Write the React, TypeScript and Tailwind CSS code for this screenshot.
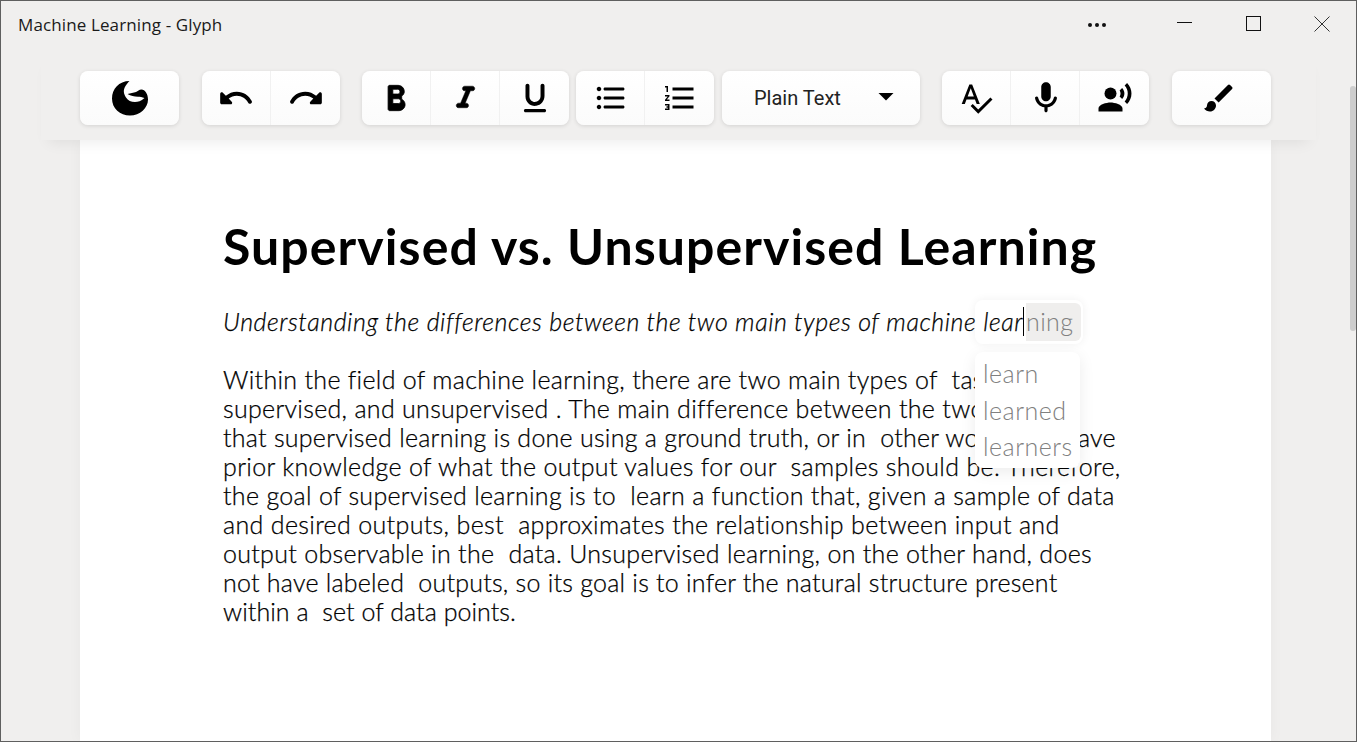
import {
  MdFormatListNumbered,
  MdSpellcheck,
  MdRecordVoiceOver,
  MdBrush,
  MdArrowDropDown,
} from "react-icons/md";
import type { ReactNode } from "react";

// tracking is per line so the line ends land where the reference breaks them
const bodyLines = [
  { text: "Within the field of machine learning, there are two main types of  tasks:", fit: "tracking-[0.3px]" },
  { text: "supervised, and unsupervised . The main difference between the two is", fit: "tracking-[0.3px]" },
  { text: "that supervised learning is done using a ground truth, or in  other words, we have", fit: "tracking-[0.26px]" },
  { text: "prior knowledge of what the output values for our  samples should be. Therefore,", fit: "tracking-[0.34px]" },
  { text: "the goal of supervised learning is to  learn a function that, given a sample of data", fit: "tracking-[0.31px]" },
  { text: "and desired outputs, best  approximates the relationship between input and", fit: "tracking-[0.34px]" },
  { text: "output observable in the  data. Unsupervised learning, on the other hand, does", fit: "tracking-[0.29px]" },
  { text: "not have labeled  outputs, so its goal is to infer the natural structure present", fit: "tracking-[0.24px]" },
  { text: "within a  set of data points.", fit: "tracking-[0.05px]" },
];

// rounded material glyphs, react-icons only ships the sharp ones
const glyphs = {
  undo: "M12.500 8c-2.650 0-5.050.99-6.900 2.600L3.710 8.710C3.080 8.080 2 8.520 2 9.410V15c0 .55.45 1 1 1h5.590c.89 0 1.340-1.080.71-1.710l-1.910-1.910c1.390-1.160 3.160-1.880 5.120-1.880 3.160 0 5.890 1.840 7.190 4.500.27.560.91.840 1.500.640.710-.230 1.070-1.040.750-1.720C20.230 10.420 16.650 8 12.500 8z",
  redo: "M18.400 10.600C16.550 8.990 14.150 8 11.500 8c-4.160 0-7.740 2.420-9.450 5.930-.32.670.04 1.470.75 1.710.590.200 1.230-.080 1.500-.640 1.300-2.660 4.030-4.500 7.200-4.500 1.950 0 3.730.720 5.120 1.880l-1.910 1.910c-.63.630-.19 1.710.70 1.710H21c.55 0 1-.45 1-1V9.410c0-.89-1.080-1.330-1.710-.7l-1.890 1.890z",
  bold: "M15.600 10.790c.97-.67 1.650-1.770 1.650-2.790 0-2.260-1.750-4-4-4H8c-.55 0-1 .45-1 1v14c0 .55.45 1 1 1h5.780c2.070 0 3.960-1.690 3.970-3.770.01-1.530-.85-2.840-2.150-3.440zM10 6.500h3c.83 0 1.500.67 1.500 1.500s-.67 1.500-1.500 1.500h-3v-3zm3.500 9H10v-3h3.500c.83 0 1.500.67 1.500 1.500s-.67 1.500-1.500 1.500z",
  italic: "M10 5.500c0 .83.67 1.500 1.500 1.500h.71l-3.420 8H7.500c-.83 0-1.500.67-1.500 1.500S6.670 18 7.500 18h5c.83 0 1.500-.67 1.500-1.500s-.67-1.500-1.500-1.500h-.71l3.420-8h1.290c.83 0 1.500-.67 1.500-1.500S17.330 4 16.500 4h-5c-.83 0-1.500.67-1.500 1.500z",
  underline: "M12.790 16.950c3.030-.39 5.210-3.110 5.210-6.170V4.250C18 3.560 17.440 3 16.750 3s-1.250.56-1.250 1.250v6.650c0 1.670-1.130 3.190-2.770 3.520-2.250.47-4.230-1.250-4.230-3.420V4.250C8.500 3.560 7.940 3 7.250 3S6 3.560 6 4.250v6.750c0 3.570 3.130 6.420 6.790 5.950zM5 20c0 .55.45 1 1 1h12c.55 0 1-.45 1-1s-.45-1-1-1H6c-.55 0-1 .45-1 1z",
  bullets: "M4 10.500c-.83 0-1.500.67-1.500 1.500s.67 1.500 1.500 1.500 1.500-.67 1.500-1.500-.67-1.500-1.500-1.500zm0-6c-.83 0-1.500.67-1.500 1.500S3.170 7.500 4 7.500 5.500 6.830 5.500 6 4.830 4.500 4 4.500zm0 12c-.83 0-1.500.68-1.500 1.500s.68 1.500 1.500 1.500 1.500-.68 1.500-1.500-.67-1.500-1.500-1.500zM8 19h12c.55 0 1-.45 1-1s-.45-1-1-1H8c-.55 0-1 .45-1 1s.45 1 1 1zm0-6h12c.55 0 1-.45 1-1s-.45-1-1-1H8c-.55 0-1 .45-1 1s.45 1 1 1zM7 6c0 .55.45 1 1 1h12c.55 0 1-.45 1-1s-.45-1-1-1H8c-.55 0-1 .45-1 1z",
  mic: "M12 14c1.660 0 3-1.340 3-3V5c0-1.660-1.340-3-3-3S9 3.340 9 5v6c0 1.660 1.340 3 3 3zm5.910-3c-.49 0-.9.36-.98.85C16.520 14.200 14.470 16 12 16s-4.520-1.800-4.930-4.150c-.08-.49-.49-.85-.98-.85-.61 0-1.090.54-1 1.140.49 3 2.890 5.350 5.910 5.780V20c0 .55.45 1 1 1s1-.45 1-1v-2.080c3.020-.43 5.420-2.780 5.910-5.780.1-.6-.39-1.140-1-1.140z",
};

function Glyph({ d, size = 36, weight = 0 }: { d: string; size?: number; weight?: number }) {
  return (
    <svg width={size} height={size} viewBox="0 0 24 24" fill="#000" stroke="#000" strokeWidth={weight} strokeLinejoin="round">
      <path d={d} />
    </svg>
  );
}

function Logo() {
  return (
    <svg width="36" height="35" viewBox="0 0 36 35">
      <path
        d="M17.500 0C7 0 0 8 0 17.500C0 27.500 8 34.500 18 34.500C28 34.500 36 27 36 18.500C36 13 33 8.500 29.500 8.500C27 8.500 26 10 24 11C21.500 12 18.500 12 15.500 13C19 15 22 15.500 26 15.700C28 15.800 30 16 32.500 17C29 20.300 26 21 23 21C19 21 16 19.500 14 16.500C11.500 12.500 11 9 13.500 5C15 3 16 1 17.500 0z"
        fill="#000"
      />
    </svg>
  );
}

function Group({ className, children }: { className: string; children: ReactNode }) {
  return (
    <div
      className={`flex h-[54px] divide-x divide-[#f1f1f1] rounded-lg bg-gradient-to-b from-white to-[#fbfbfb] shadow-[0_1px_4px_rgba(0,0,0,0.12)] ${className}`}
    >
      {children}
    </div>
  );
}

function Tool({ children, width = "w-[69px]" }: { children: ReactNode; width?: string }) {
  return <div className={`flex ${width} items-center justify-center text-black`}>{children}</div>;
}

export default function App() {
  return (
    <div className="relative flex h-[742px] w-full flex-col overflow-hidden border border-[#5f5f5f] bg-[#f0efee] font-['Lato',sans-serif]">
      <div className="flex h-[50px] shrink-0 items-start justify-between">
        <div className="pl-[17px] pt-[13px] font-['Open_Sans',sans-serif] text-[17px] leading-[22px] tracking-[0.12px] text-[#1a1a1a]">
          Machine Learning - Glyph
        </div>
        <div className="flex items-start pt-[15px]">
          <div className="mr-[70px] mt-[7px] flex -translate-x-px gap-[3px]">
            <span className="h-[4px] w-[4px] rounded-full bg-[#111]" />
            <span className="h-[4px] w-[4px] rounded-full bg-[#111]" />
            <span className="h-[4px] w-[4px] rounded-full bg-[#111]" />
          </div>
          <div className="mr-[54px] mt-[6px] h-px w-[15px] bg-[#111]" />
          <div className="mr-[53px] h-[15px] w-[15px] border border-[#111]" />
          <svg className="mr-[26px]" width="16" height="16" viewBox="0 0 16 16">
            <path d="M0.500 0.500L15.500 15.500M15.500 0.500L0.500 15.500" stroke="#333" fill="none" />
          </svg>
        </div>
      </div>

      <div className="relative z-10 mx-[40px] flex h-[89px] shrink-0 items-start bg-[#f0efee] pl-[39px] pt-[20px] shadow-[0_10px_14px_-8px_rgba(0,0,0,0.08)]">
        <Group className="w-[99px]">
          <Tool width="w-full">
            <Logo />
          </Tool>
        </Group>
        <Group className="ml-[23px] w-[138px]">
          <Tool>
            <Glyph d={glyphs.undo} size={38} />
          </Tool>
          <Tool>
            <Glyph d={glyphs.redo} size={38} />
          </Tool>
        </Group>
        <Group className="ml-[22px] w-[207px]">
          <Tool>
            <Glyph d={glyphs.bold} size={38} weight={0.5} />
          </Tool>
          <Tool>
            <Glyph d={glyphs.italic} size={37} weight={0.3} />
          </Tool>
          <Tool>
            <Glyph d={glyphs.underline} size={38} />
          </Tool>
        </Group>
        <Group className="ml-[7px] w-[138px]">
          <Tool>
            <div className="pl-[2px]">
              <Glyph d={glyphs.bullets} size={36} />
            </div>
          </Tool>
          <Tool>
            <MdFormatListNumbered size={36} />
          </Tool>
        </Group>
        <div className="ml-[8px] flex h-[54px] w-[198px] items-center rounded-lg bg-gradient-to-b from-white to-[#fbfbfb] pl-[32px] shadow-[0_1px_4px_rgba(0,0,0,0.12)]">
          <span className="font-['Roboto',sans-serif] text-[20px] text-[#222]">Plain Text</span>
          <MdArrowDropDown className="ml-[27px] -translate-y-[2px]" size={36} />
        </div>
        <Group className="ml-[22px] w-[207px]">
          <Tool>
            <MdSpellcheck size={36} />
          </Tool>
          <Tool>
            <div className="pl-[2px]">
              <Glyph d={glyphs.mic} size={38} />
            </div>
          </Tool>
          <Tool>
            <MdRecordVoiceOver size={36} />
          </Tool>
        </Group>
        <Group className="ml-[23px] w-[99px]">
          <Tool width="w-full">
            <div className="pr-[6px]">
              <MdBrush size={36} />
            </div>
          </Tool>
        </Group>
      </div>

      <div className="relative ml-[79px] mr-[85px] flex-1 bg-white pl-[143px] pt-[77px] text-black shadow-[0_0_14px_rgba(0,0,0,0.04)]">
        <div className="absolute left-[895px] top-[160px] h-[44px] w-[108px] rounded-lg bg-white shadow-[0_0_10px_rgba(0,0,0,0.06)]">
          <div className="absolute left-[51px] top-[3px] flex h-[38px] w-[55px] items-center rounded-r-md bg-[#efeeed] text-[25px] font-light tracking-[0.4px] text-[#808080]">
            ning
          </div>
          <div className="absolute left-[48px] top-[7px] h-[29px] w-px bg-black" />
        </div>

        <h1 className="whitespace-pre text-[50px] font-bold leading-[58px] tracking-[1.08px]">
          Supervised vs. Unsupervised Learning
        </h1>
        <p className="relative mt-[32px] whitespace-pre text-[25px] font-light italic leading-[29px] tracking-[0.55px] [-webkit-text-stroke:0.25px_#000]">
          Understanding the differences between the two main types of machine lear
        </p>
        <div className="mt-[29px] text-[25px] font-light leading-[29px] [-webkit-text-stroke:0.25px_#000]">
          {bodyLines.map((line) => (
            <div key={line.text} className={`whitespace-pre ${line.fit}`}>
              {line.text}
            </div>
          ))}
        </div>

        <div className="absolute left-[895px] top-[212px] h-[116px] w-[105px] rounded-lg bg-white pl-[8px] pt-[3px] text-[25px] font-light leading-[36.500px] tracking-[0.5px] text-[#808080] shadow-[0_4px_16px_rgba(0,0,0,0.08)]">
          <div>learn</div>
          <div>learned</div>
          <div>learners</div>
        </div>
      </div>

      <div className="absolute right-0 top-[85px] h-[245px] w-[6px] rounded-sm bg-[#cdcdcd]" />
    </div>
  );
}
